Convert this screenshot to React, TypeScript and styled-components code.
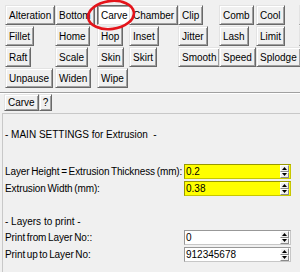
import styled, { createGlobalStyle, css } from "styled-components";

const GlobalStyle = createGlobalStyle`
  html, body {
    margin: 0;
    padding: 0;
    background: #f0f0f0;
    overflow: hidden;
  }
  body {
    font-family: "Liberation Sans", Arial, sans-serif;
    font-size: 10px;
    color: #000;
  }
`;

// "" marks a button whose label lies past the window's right edge
const pluginRows = [
  ["Alteration", "Bottom", "Carve", "Chamber", "Clip", "Comb", "Cool", ""],
  ["Fillet", "Home", "Hop", "Inset", "Jitter", "Lash", "Limit", ""],
  ["Raft", "Scale", "Skin", "Skirt", "Smooth", "Speed", "Splodge"],
  ["Unpause", "Widen", "Wipe"],
];

type Field = { label: string; value: string; highlight?: boolean };

const mainFields: Field[] = [
  { label: "Layer Height = Extrusion Thickness (mm):", value: "0.2", highlight: true },
  { label: "Extrusion Width (mm):", value: "0.38", highlight: true },
];

const layerFields: Field[] = [
  { label: "Print from Layer No::", value: "0" },
  { label: "Print up to Layer No:", value: "912345678" },
];

// Spin box with up/down arrows on the right
function SpinBox({ value, highlight }: { value: string; highlight?: boolean }) {
  return (
    <SpinFrame $highlight={highlight}>
      <SpinValue>{value}</SpinValue>
      <Arrows>
        <ArrowButton>
          <svg width="5" height="3" viewBox="0 0 5 3">
            <path d="M2.5 0 L5 3 L0 3 Z" fill="#000" />
          </svg>
        </ArrowButton>
        <ArrowButton>
          <svg width="5" height="3" viewBox="0 0 5 3">
            <path d="M0 0 L5 0 L2.5 3 Z" fill="#000" />
          </svg>
        </ArrowButton>
      </Arrows>
    </SpinFrame>
  );
}

export default function App() {
  return (
    <>
      <GlobalStyle />
      <Page>
        <PluginArea>
          <PluginGrid>
            {pluginRows.map((row, r) =>
              row.map((name, c) => (
                <TkButton
                  key={`${r}-${c}`}
                  $selected={r === 0 && c === 2}
                  $stub={name === ""}
                  style={{ gridRow: r + 1, gridColumn: c + 1 }}
                >
                  {name}
                </TkButton>
              ))
            )}
          </PluginGrid>
          {/* hand-drawn red circle marking the selected tab */}
          <Marker width="52" height="36" viewBox="0 0 52 36">
            <ellipse
              cx="26"
              cy="17"
              rx="23"
              ry="14"
              fill="none"
              stroke="#e4141b"
              strokeWidth="2.6"
              transform="rotate(-7 26 17)"
            />
          </Marker>
        </PluginArea>
        <Separator />
        <ToolRow>
          <SmallButton>Carve</SmallButton>
          <SmallButton>?</SmallButton>
        </ToolRow>
        <SettingsFrame>
          <SectionTitle>- MAIN SETTINGS for Extrusion&nbsp; -</SectionTitle>
          <FieldList $gapTop={21}>
            {mainFields.map((f) => (
              <FieldRow key={f.label}>
                <Label>{f.label}</Label>
                <SpinBox value={f.value} highlight={f.highlight} />
              </FieldRow>
            ))}
          </FieldList>
          <SectionTitle $top={17}>- Layers to print -</SectionTitle>
          <FieldList $gapTop={0}>
            {layerFields.map((f) => (
              <FieldRow key={f.label}>
                <Label>{f.label}</Label>
                <SpinBox value={f.value} highlight={f.highlight} />
              </FieldRow>
            ))}
          </FieldList>
        </SettingsFrame>
      </Page>
    </>
  );
}

// Styled components
const Page = styled.div`
  width: 300px;
  height: 272px;
  overflow: hidden;
  display: flex;
  flex-direction: column;
`;

const PluginArea = styled.div`
  position: relative;
`;

const PluginGrid = styled.div`
  display: grid;
  grid-template-columns: 50px 42px 32px 49px 41px 37px 43px 60px;
  grid-auto-rows: 20px;
  row-gap: 1px;
  justify-items: start;
  padding: 5px 0 0 5px;
  width: 400px;
`;

const raised = css`
  border: 1px solid;
  border-color: #e3e3e3 #696969 #696969 #e3e3e3;
  box-shadow: inset 1px 1px #fff, inset -1px -1px #a0a0a0;
`;

const sunken = css`
  border: 1px solid;
  border-color: #696969 #e3e3e3 #e3e3e3 #696969;
  box-shadow: inset 1px 1px #a0a0a0, inset -1px -1px #fff;
`;

const TkButton = styled.div<{ $selected?: boolean; $stub?: boolean }>`
  box-sizing: border-box;
  height: 20px;
  padding: 0 3px;
  min-width: ${(p) => (p.$stub ? "40px" : "0")};
  display: flex;
  align-items: center;
  white-space: nowrap;
  background: ${(p) => (p.$selected ? "#fff" : "#f0f0f0")};
  ${(p) => (p.$selected ? sunken : raised)}
`;

const Marker = styled.svg`
  position: absolute;
  left: 85px;
  top: -2px;
  pointer-events: none;
`;

const Separator = styled.div`
  margin-top: 4px;
  height: 0;
  border-top: 1px solid #a0a0a0;
  border-bottom: 1px solid #fff;
`;

const ToolRow = styled.div`
  display: flex;
  padding: 0 0 0 4px;
`;

const SmallButton = styled(TkButton)`
  height: 17px;
  padding: 0 3px;
`;

const SettingsFrame = styled.div`
  flex: 1;
  margin: 2px 0 0 2px;
  border-top: 1px solid #c8c8c8;
  border-left: 1px solid #c8c8c8;
  padding: 12px 0 0 2px;
`;

const SectionTitle = styled.div<{ $top?: number }>`
  height: 17px;
  line-height: 17px;
  margin-top: ${(p) => p.$top ?? 0}px;
  white-space: nowrap;
`;

const FieldList = styled.div<{ $gapTop: number }>`
  display: flex;
  flex-direction: column;
  gap: 2px;
  margin-top: ${(p) => p.$gapTop}px;
`;

const FieldRow = styled.div`
  display: grid;
  grid-template-columns: 179px 107px;
  align-items: center;
`;

const Label = styled.div`
  white-space: nowrap;
  letter-spacing: -0.1px;
  word-spacing: -1px;
`;

const SpinFrame = styled.div<{ $highlight?: boolean }>`
  box-sizing: border-box;
  height: 15px;
  display: flex;
  align-items: stretch;
  background: ${(p) => (p.$highlight ? "#ffff00" : "#fff")};
  border: 1px solid;
  border-color: rgba(0, 0, 0, 0.4) rgba(0, 0, 0, 0.22) rgba(0, 0, 0, 0.22)
    rgba(0, 0, 0, 0.4);
`;

const SpinValue = styled.div`
  flex: 1;
  padding-left: 1px;
  line-height: 13px;
`;

const Arrows = styled.div`
  width: 9px;
  margin-right: 1px;
  display: flex;
  flex-direction: column;
`;

const ArrowButton = styled.div`
  flex: 1;
  display: flex;
  align-items: center;
  justify-content: center;
  background: #f0f0f0;
  border: 1px solid;
  border-color: #fff #8a8a8a #8a8a8a #fff;
  box-sizing: border-box;
`;
